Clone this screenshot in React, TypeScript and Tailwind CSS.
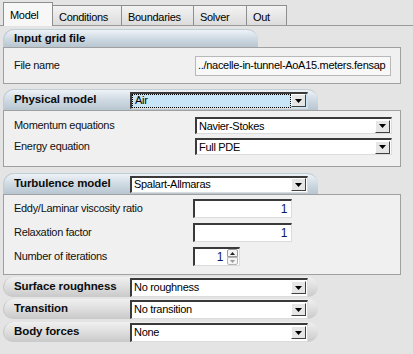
import { FC, ReactNode } from 'react';

const FONT = { fontFamily: '"Liberation Sans", Arial, sans-serif' };

const Arrow: FC = () => (
  <svg width="7" height="4" viewBox="0 0 7 4">
    <path d="M0 0h7L3.5 4z" fill="#000" />
  </svg>
);

const DropButton: FC = () => (
  <div className="flex items-center justify-center w-[15px] h-[13px] mr-[1px] bg-[#e6e6e6] border border-t-white border-l-white border-b-[#404040] border-r-[#404040]">
    <Arrow />
  </div>
);

const Combo: FC<{ value: string; width: number; height?: number; active?: boolean }> = ({
  value,
  width,
  height = 17,
  active,
}) => (
  <div
    style={{ width, height }}
    className={`flex items-center border-t-2 border-l-2 border-t-[#3a3a3a] border-l-[#3a3a3a] border-b border-r border-b-[#dcdcdc] border-r-[#dcdcdc] ${
      active ? 'bg-[#c7e5f7]' : 'bg-white'
    }`}
  >
    <div
      className={`flex-1 h-full flex items-center pl-[2px] text-black ${
        active ? 'border border-dotted border-black' : ''
      }`}
    >
      {value}
    </div>
    <DropButton />
  </div>
);

const NumBox: FC<{ value: string; width: number; spin?: boolean }> = ({ value, width, spin }) => (
  <div
    style={{ width }}
    className="flex items-center h-[19px] bg-white border-t-2 border-l-2 border-t-[#3a3a3a] border-l-[#3a3a3a] border-b border-r border-b-[#dcdcdc] border-r-[#dcdcdc]"
  >
    <div className="flex-1 text-right pr-[4px] text-[#0a1a5a] text-[12px]">{value}</div>
    {spin && (
      <div className="flex flex-col w-[11px] h-[16px] mr-[1px]">
        <div className="flex-1 flex items-center justify-center border border-[#9a9a9a] rounded-t-[2px] bg-[#f4f4f4]">
          <svg width="5" height="3" viewBox="0 0 5 3">
            <path d="M0 3h5L2.5 0z" fill="#222" />
          </svg>
        </div>
        <div className="flex-1 flex items-center justify-center border border-[#b5b5b5] rounded-b-[2px] bg-[#f4f4f4]">
          <svg width="5" height="3" viewBox="0 0 5 3">
            <path d="M0 0h5L2.5 3z" fill="#999" />
          </svg>
        </div>
      </div>
    )}
  </div>
);

const HeaderTitle: FC<{ title: string }> = ({ title }) => (
  <div className="w-[116px] font-bold text-[11.5px] tracking-[-0.1px] text-[#0c0c0c]">{title}</div>
);

const BlueHeader: FC<{ title: string; width: number; children?: ReactNode }> = ({
  title,
  width,
  children,
}) => (
  <div
    style={{ width }}
    className="flex items-center h-full pl-[10px] rounded-tl-[11px] rounded-tr-[11px] bg-gradient-to-b from-[#eef3f7] via-[#cfdae3] to-[#b8c6d1] border-t border-l border-t-[#c0ccd6] border-l-[#c0ccd6]"
  >
    <HeaderTitle title={title} />
    {children}
  </div>
);

const GrayHeader: FC<{ title: string; value: string; className?: string }> = ({ title, value, className }) => (
  <div
    className={`flex items-center w-[315px] h-[20px] pl-[10px] rounded-[10px] bg-gradient-to-b from-[#f0f0f0] via-[#dedede] to-[#c9c9c9] border-l border-l-[#c4c4c4] ${className ?? ''}`}
  >
    <HeaderTitle title={title} />
    <Combo value={value} width={178} height={19} />
  </div>
);

const Box: FC<{ className?: string; children: ReactNode }> = ({ className, children }) => (
  <div className={`w-[398px] bg-[#f0f0f0] border border-[#a0a0a0] pl-[10px] ${className ?? ''}`}>{children}</div>
);

const Row: FC<{ label: string; children: ReactNode; labelWidth?: number }> = ({ label, children, labelWidth = 181 }) => (
  <div className="flex items-center">
    <div style={{ width: labelWidth }} className="text-[#111]">
      {label}
    </div>
    {children}
  </div>
);

const tabs = [
  { name: 'Conditions', w: 69 },
  { name: 'Boundaries', w: 72 },
  { name: 'Solver', w: 53 },
  { name: 'Out', w: 40 },
];

const App: FC = () => {
  return (
    <div style={FONT} className="w-[413px] h-[354px] bg-[#e4e4e4] text-[11px] tracking-[-0.3px] overflow-hidden">
      <div className="flex items-end h-[26px] pl-[3px] border-b border-[#9a9a9a]">
        <div className="w-[50px] h-[24px] -mb-[1px] bg-[#f7f7f7] border border-b-0 border-[#8e8e8e] pl-[6px] pt-[4px] text-black">
          Model
        </div>
        {tabs.map((t) => (
          <div
            key={t.name}
            style={{ width: t.w }}
            className="h-[20px] bg-gradient-to-b from-[#f3f3f3] to-[#dcdcdc] border border-b-0 border-l-0 border-[#8e8e8e] pl-[6px] pt-[3px] text-black"
          >
            {t.name}
          </div>
        ))}
      </div>

      <div className="flex flex-col pl-[3px]">
        <div className="h-[18px] mt-[3px]">
          <BlueHeader title="Input grid file" width={255} />
        </div>
        <Box className="h-[37px] flex items-center">
          <Row label="File name">
            <div className="w-[196px] h-[20px] flex items-center pl-[2px] bg-[#f8f8f8] border border-[#b8b8b8] text-black whitespace-nowrap overflow-hidden">
              ../nacelle-in-tunnel-AoA15.meters.fensap
            </div>
          </Row>
        </Box>

        <div className="h-[21px] mt-[5px]">
          <BlueHeader title="Physical model" width={315}>
            <Combo value="Air" width={178} active />
          </BlueHeader>
        </div>
        <Box className="h-[57px] pt-[6px] flex flex-col gap-[4px]">
          <Row label="Momentum equations">
            <Combo value="Navier-Stokes" width={197} />
          </Row>
          <Row label="Energy equation">
            <Combo value="Full PDE" width={197} />
          </Row>
        </Box>

        <div className="h-[21px] mt-[6px]">
          <BlueHeader title="Turbulence model" width={315}>
            <Combo value="Spalart-Allmaras" width={178} />
          </BlueHeader>
        </div>
        <Box className="h-[81px] pt-[4px] flex flex-col gap-[5px]">
          <Row label="Eddy/Laminar viscosity ratio" labelWidth={179}>
            <NumBox value="1" width={99} />
          </Row>
          <Row label="Relaxation factor" labelWidth={179}>
            <NumBox value="1" width={99} />
          </Row>
          <Row label="Number of iterations" labelWidth={179}>
            <NumBox value="1" width={47} spin />
          </Row>
        </Box>

        <GrayHeader title="Surface roughness" value="No roughness" className="mt-[2px]" />
        <GrayHeader title="Transition" value="No transition" className="mt-[2px]" />
        <GrayHeader title="Body forces" value="None" className="mt-[3px]" />
      </div>
    </div>
  );
};

export default App;
